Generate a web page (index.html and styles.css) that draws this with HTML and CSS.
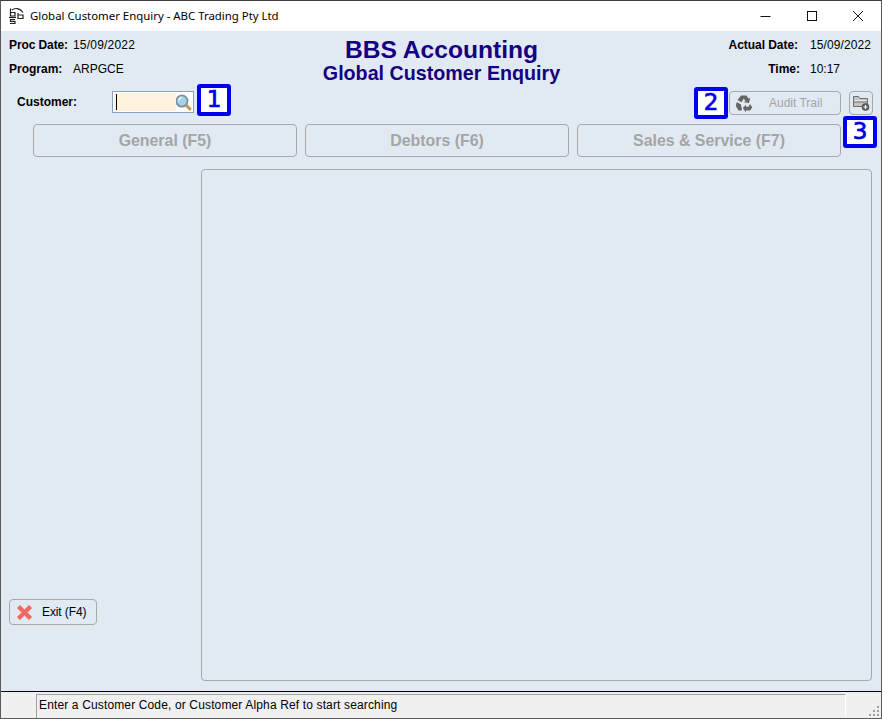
FILE: index.html
```html
<!DOCTYPE html>
<html lang="en">
<head>
<meta charset="utf-8">
<title>Global Customer Enquiry</title>
<link rel="stylesheet" href="styles.css">
</head>
<body>
<div class="window">
  <div class="titlebar">
    <svg class="app-icon" width="16" height="18" viewBox="0 0 16 18" fill="none" stroke="#222" stroke-width="1.200">
      <path d="M1.500 1.500v7.500h4.500V5.500h-4.500"/>
      <path d="M9 6v5.500h5V8H9"/>
      <path d="M3 3C6 .5 11 1 14 5.500"/>
      <path d="M0 10.500h7"/>
      <path d="M6 12.500H1.500V14.300H6V16.500H1"/>
    </svg>
    <span class="title-text">Global Customer Enquiry - ABC Trading Pty Ltd</span>
    <div class="win-controls">
      <svg width="46" height="30" viewBox="0 0 46 30"><path d="M17.500 15.500h10" stroke="#111" fill="none"/></svg>
      <svg width="46" height="30" viewBox="0 0 46 30"><rect x="18.500" y="10.500" width="9" height="9" stroke="#111" fill="none"/></svg>
      <svg width="46" height="30" viewBox="0 0 46 30"><path d="M18 10l10 10M28 10l-10 10" stroke="#111" fill="none"/></svg>
    </div>
  </div>

  <div class="content">
    <header class="header">
      <div class="info info-left">
        <div class="info-row"><b class="lbl-proc">Proc Date:</b><span class="val-date">15/09/2022</span></div>
        <div class="info-row"><b class="lbl-prog">Program:</b><span>ARPGCE</span></div>
      </div>
      <div class="heading">
        <div class="heading-main">BBS Accounting</div>
        <div class="heading-sub">Global Customer Enquiry</div>
      </div>
      <div class="info info-right">
        <div class="info-row"><b class="lbl-actual">Actual Date:</b><span class="val-fixed val-date-right">15/09/2022</span></div>
        <div class="info-row"><b class="lbl-time">Time:</b><span class="val-fixed">10:17</span></div>
      </div>
    </header>

    <div class="toolbar">
      <label class="customer-label">Customer:</label>
      <div class="search-box">
        <div class="search-field"><i class="caret"></i></div>
        <svg class="search-icon" width="17" height="17" viewBox="0 0 17 17">
          <circle cx="7" cy="7" r="5.700" fill="#a4d3ee" stroke="#7f8f9b" stroke-width="1.800"/>
          <path d="M3.800 6.500a3.500 3.500 0 0 1 3.200-3" stroke="#eaf6fc" stroke-width="1.400" fill="none"/>
          <path d="M11.800 11.800l3.200 3.200" stroke="#c4944c" stroke-width="3" stroke-linecap="round"/>
        </svg>
      </div>
      <span class="badge badge-1">1</span>
      <div class="toolbar-right">
        <span class="badge badge-2">2</span>
        <button class="btn audit-btn" type="button" disabled>
          <svg width="18" height="18" viewBox="0 0 18 18" fill="#666">
            <path d="M6 1.500h5.500l2 3.300 1.800-1L14 9l-5.300-.7 1.800-1.100L8.800 4.500 6.500 8.300 2.500 6z"/>
            <path d="M1.800 8l4.200 2.400v.1L7 16.500H3.500L.8 12z"/>
            <path d="M15 10l2.200 3.200-2 3.300H11v1.800l-3.300-4.200 3.300-3.300v1.900h2.500z"/>
          </svg>
          <span>Audit Trail</span>
        </button>
        <button class="btn folder-btn" type="button" disabled aria-label="Add attachment">
          <svg width="18" height="17" viewBox="0 0 18 17">
            <path d="M1.500 1.500h5l1.500 2h7.500v8h-14z" fill="#c4c4c4" stroke="#6c6c6c"/>
            <path d="M2.500 5.500h12" stroke="#e8e8e8"/>
            <path d="M1.500 7h14" stroke="#7a7a7a"/>
            <circle cx="13.500" cy="12" r="3.800" fill="#585858"/>
            <path d="M11.500 12h4M13.500 10v4" stroke="#fff" stroke-width="1.200"/>
          </svg>
        </button>
      </div>
    </div>
    <span class="badge badge-3">3</span>

    <nav class="tabs">
      <button class="tab" type="button" disabled>General (F5)</button>
      <button class="tab" type="button" disabled>Debtors (F6)</button>
      <button class="tab" type="button" disabled>Sales &amp; Service (F7)</button>
    </nav>

    <div class="main">
      <aside class="sidebar">
        <button class="btn exit-btn" type="button">
          <svg width="17" height="17" viewBox="0 0 17 17">
            <path d="M4 1l4.500 4.500L13 1l3 3-4.500 4.500L16 13l-3 3-4.500-4.500L4 16l-3-3 4.500-4.500L1 4z" fill="#f3675f" stroke="#eda29d" stroke-width="1"/>
          </svg>
          <span>Exit (F4)</span>
        </button>
      </aside>
      <section class="panel"></section>
    </div>
  </div>

  <footer class="statusbar">
    <div class="status-text">Enter a Customer Code, or Customer Alpha Ref to start searching</div>
    <svg class="grip" width="12" height="12" viewBox="0 0 12 12" fill="#a0a0a0">
      <rect x="9" y="1" width="2" height="2"/>
      <rect x="5" y="5" width="2" height="2"/><rect x="9" y="5" width="2" height="2"/>
      <rect x="1" y="9" width="2" height="2"/><rect x="5" y="9" width="2" height="2"/><rect x="9" y="9" width="2" height="2"/>
    </svg>
  </footer>
</div>
</body>
</html>
```

FILE: styles.css
```css
* { box-sizing: border-box; }
html, body { margin: 0; padding: 0; height: 100%; }
body { font-family: "Liberation Sans", Arial, sans-serif; font-size: 12px; color: #000; overflow: hidden; }

.window {
  position: relative;
  width: 882px;
  height: 719px;
  display: flex;
  flex-direction: column;
  background: #e1e9f3;
  border: 1px solid #5a5a5a;
  border-top-color: #3c3c3c;
}

.titlebar {
  height: 30px;
  flex: none;
  background: #fff;
  display: flex;
  align-items: center;
  padding-left: 8px;
}
.app-icon { margin-right: 5px; flex: none; }
.title-text { font-family: "Noto Sans", "Open Sans", sans-serif; font-size: 11.4px; color: #000; position: relative; top: -1px; }
.win-controls { margin-left: auto; display: flex; }
.win-controls svg { display: block; }

.content { flex: 1; position: relative; display: flex; flex-direction: column; min-height: 0; }

.header {
  height: 58px;
  display: grid;
  grid-template-columns: 1fr auto 1fr;
  padding: 0 10px 0 8px;
}
.info { display: flex; flex-direction: column; padding-top: 7px; gap: 11px; }
.info-row { display: flex; align-items: center; height: 13px; white-space: nowrap; }
.info-row b { font-weight: bold; }
.lbl-proc { width: 64px; letter-spacing: -0.1px; }
.lbl-prog { width: 64px; }
.info-right { align-items: flex-end; }
.lbl-actual { margin-right: 12px; letter-spacing: -0.05px; }
.lbl-time { margin-right: 10px; }
.val-date { letter-spacing: 0.2px; }
.val-date-right { letter-spacing: 0.1px; }
.val-fixed { width: 61px; }
.heading { text-align: center; color: #150080; font-weight: bold; padding-top: 5px; width: 300px; margin-left: 3px; }
.heading-main { font-size: 24.6px; line-height: 27px; }
.heading-sub { font-size: 19.7px; line-height: 20px; }

.toolbar {
  height: 35px;
  display: flex;
  align-items: flex-start;
  padding-left: 16px;
  padding-right: 8px;
}
.customer-label { font-weight: bold; width: 95px; margin-top: 6px; line-height: 14px; }
.search-box {
  width: 82px;
  height: 22px;
  margin-top: 2px;
  border: 1px solid #86a1c0;
  background: #fff;
  display: flex;
  align-items: center;
  padding: 1px;
  position: relative;
}
.search-field { width: 63px; height: 100%; background: #fff2dc; position: relative; }
.caret { position: absolute; left: 2px; top: 1px; bottom: 1px; width: 1px; background: #000; }
.search-icon { margin-left: -1px; }

.badge {
  width: 34px;
  height: 32px;
  border: 4px solid #0000f0;
  border-radius: 3px;
  background: #fff;
  color: #0000e6;
  font-size: 23px;
  font-family: "DejaVu Sans", sans-serif;
  -webkit-text-stroke: 0.7px #0000e6;
  line-height: 23px;
  text-align: center;
  flex: none;
}
.badge-1 { margin-left: 3px; margin-top: -5px; }
.badge-2 { margin-top: -2px; margin-right: 1px; }
.badge-3 { position: absolute; left: 842px; top: 85px; }

.toolbar-right { margin-left: auto; display: flex; align-items: flex-start; }

.btn {
  background: #e1e9f3;
  border: 1px solid #a9a9a9;
  border-radius: 4px;
  font-family: "Liberation Sans", Arial, sans-serif;
  font-size: 12px;
  padding: 0;
  display: flex;
  align-items: center;
}
.audit-btn { width: 112px; height: 24px; color: #a5a5a5; margin-top: 2px; padding-left: 5px; }
.audit-btn span { margin-left: 16px; }
.folder-btn { width: 24px; height: 24px; margin-left: 8px; margin-top: 2px; justify-content: center; }

.tabs { display: flex; gap: 8px; padding-left: 32px; height: 33px; flex: none; }
.tab {
  width: 264px;
  height: 33px;
  background: #e1e9f3;
  border: 1px solid #a9a9a9;
  border-radius: 4px;
  color: #a5a5a5;
  font-family: "Liberation Sans", Arial, sans-serif;
  font-size: 15.9px;
  font-weight: bold;
  padding: 0;
}

.main { flex: 1; display: flex; min-height: 0; padding: 12px 9px 10px 8px; }
.sidebar { width: 192px; flex: none; display: flex; align-items: flex-end; padding-bottom: 56px; }
.exit-btn { width: 88px; height: 26px; padding-left: 6px; color: #000; }
.exit-btn span { margin-left: 9px; letter-spacing: -0.1px; }
.panel { flex: 1; border: 1px solid #a9a9a9; border-radius: 4px; }

.statusbar {
  height: 27px;
  flex: none;
  background: #f0f0f0;
  border-top: 1px solid #000;
  display: flex;
  padding-left: 35px;
  position: relative;
}
.status-text {
  width: 810px;
  margin-top: 2px;
  border-top: 1px solid #a0a0a0;
  border-left: 1px solid #a0a0a0;
  border-right: 1px solid #fff;
  padding: 3px 0 0 2px;
  line-height: 14px;
  font-size: 12px;
  letter-spacing: 0.14px;
}
.grip { position: absolute; right: 1px; bottom: 1px; }
```
